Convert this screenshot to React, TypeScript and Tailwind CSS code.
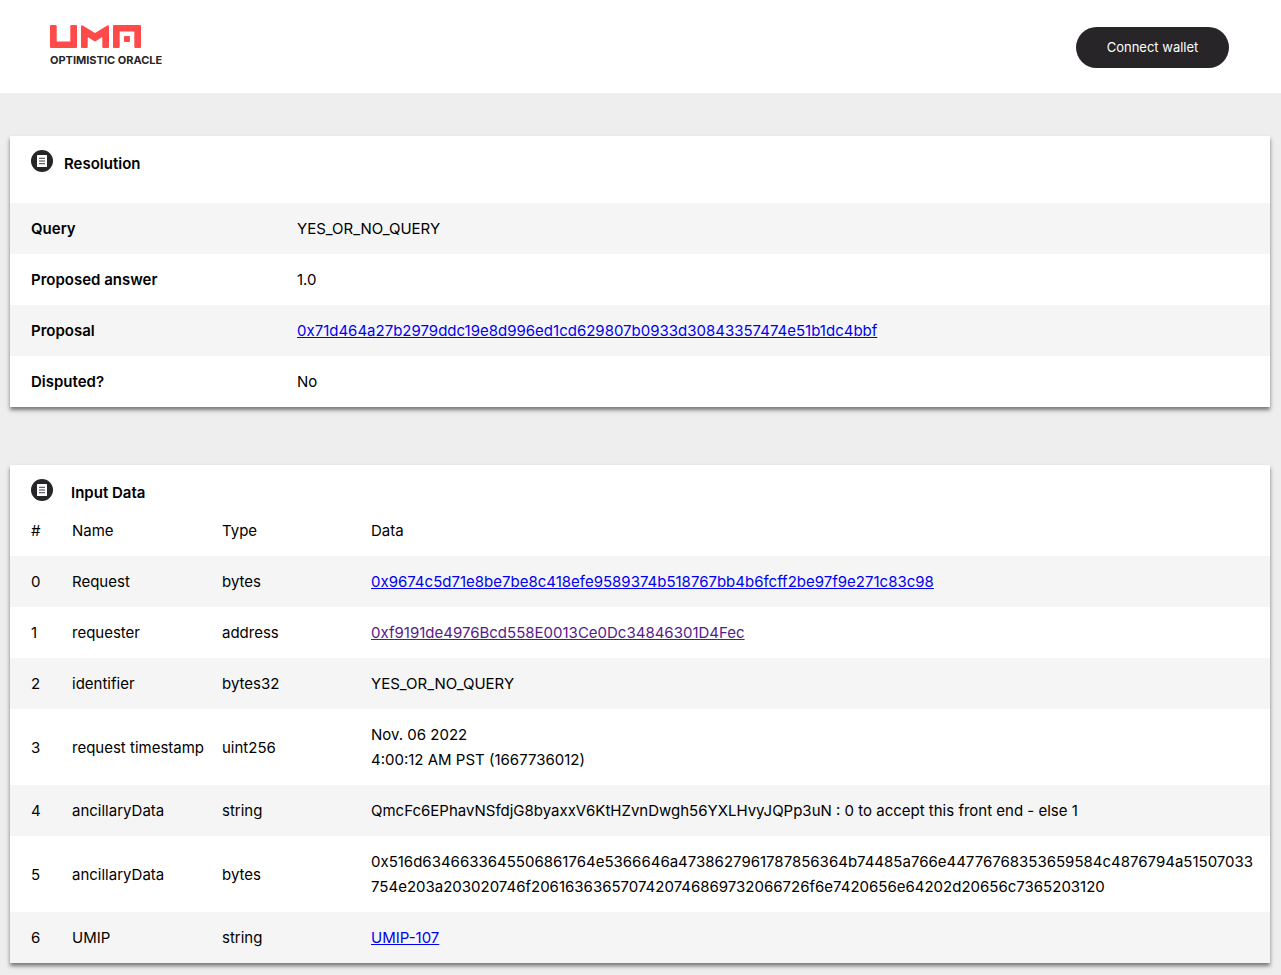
import type { ReactNode } from 'react';
import clsx from 'clsx';

interface InputRow {
  name: string;
  type: string;
  data: ReactNode;
}

const resolution: { label: string; value: ReactNode }[] = [
  { label: 'Query', value: 'YES_OR_NO_QUERY' },
  { label: 'Proposed answer', value: '1.0' },
  {
    label: 'Proposal',
    value: <DataLink>0x71d464a27b2979ddc19e8d996ed1cd629807b0933d30843357474e51b1dc4bbf</DataLink>,
  },
  { label: 'Disputed?', value: 'No' },
];

const inputData: InputRow[] = [
  {
    name: 'Request',
    type: 'bytes',
    data: <DataLink>0x9674c5d71e8be7be8c418efe9589374b518767bb4b6fcff2be97f9e271c83c98</DataLink>,
  },
  {
    name: 'requester',
    type: 'address',
    data: <DataLink seen>0xf9191de4976Bcd558E0013Ce0Dc34846301D4Fec</DataLink>,
  },
  { name: 'identifier', type: 'bytes32', data: 'YES_OR_NO_QUERY' },
  {
    name: 'request timestamp',
    type: 'uint256',
    data: (
      <>
        <div>Nov. 06 2022</div>
        <div>4:00:12 AM PST (1667736012)</div>
      </>
    ),
  },
  {
    name: 'ancillaryData',
    type: 'string',
    data: 'QmcFc6EPhavNSfdjG8byaxxV6KtHZvnDwgh56YXLHvyJQPp3uN : 0 to accept this front end - else 1',
  },
  {
    name: 'ancillaryData',
    type: 'bytes',
    data: '0x516d6346633645506861764e5366646a4738627961787856364b74485a766e44776768353659584c4876794a51507033754e203a203020746f2061636365707420746869732066726f6e7420656e64202d20656c7365203120',
  },
  { name: 'UMIP', type: 'string', data: <DataLink>UMIP-107</DataLink> },
];

function DataLink({ children, seen }: { children: ReactNode; seen?: boolean }) {
  return (
    <a href="#" className={clsx('underline', seen ? 'text-[#551a8b]' : 'text-[#0000ee]')}>
      {children}
    </a>
  );
}

function Logo() {
  return (
    <a href="#" className="flex flex-col gap-1 text-[#272528]">
      <svg width="91" height="23" viewBox="0 0 91 23" fill="#ff4a4a" aria-label="UMA">
        <path d="M1 0h4.700q1 0 1 1v15.500h13.600V1q0-1 1-1H26q1 0 1 1v21q0 1-1 1H1q-1 0-1-1V1q0-1 1-1z" />
        <path d="M31 1.500q0-2 1.700-1L45 8 57.300.5q1.700-1 1.700 1V22q0 1-1 1h-4.700q-1 0-1-1V12l-6.300 4q-1 .6-2 0l-6.300-4V22q0 1-1 1H32q-1 0-1-1z" />
        <path d="M64 0h26q1 0 1 1v21q0 1-1 1h-4.700q-1 0-1-1V6.500H69.700V22q0 1-1 1H64q-1 0-1-1V1q0-1 1-1z" />
        <rect x="74" y="11" width="6" height="6" rx="1" />
      </svg>
      <span className="text-[11px] leading-4 font-bold">OPTIMISTIC ORACLE</span>
    </a>
  );
}

function DocumentIcon() {
  return (
    <svg width="22" height="22" viewBox="0 0 22 22" fill="none" aria-hidden="true">
      <circle cx="11" cy="11" r="11" fill="#272528" />
      <rect x="6" y="5" width="10" height="12" rx="0.5" fill="#fff" />
      <path d="M8 8.300h6M8 11h6M8 13.700h6" stroke="#272528" strokeWidth="0.9" />
    </svg>
  );
}

function Card({ children }: { children: ReactNode }) {
  return <section className="bg-white shadow-[0_3px_4px_rgba(0,0,0,0.5)]">{children}</section>;
}

export default function App() {
  return (
    <div className="min-h-screen bg-[#eeeeee] font-[Inter,Arial,sans-serif] text-[15px] leading-[25px] text-black">
      <header className="flex items-start justify-between bg-white pt-[25px] pr-[52px] pb-[25px] pl-[50px]">
        <Logo />
        <button
          type="button"
          className="mt-[2px] h-[41px] w-[153px] rounded-full bg-[#272528] text-[13px] text-white"
        >
          Connect wallet
        </button>
      </header>

      <main className="flex flex-col gap-[58px] pt-[43px] pr-[11px] pb-[10px] pl-[10px]">
        <Card>
          <div className="flex h-[67px] items-start gap-[11px] px-[21px] pt-[14px]">
            <DocumentIcon />
            <h2 className="leading-7 font-semibold">Resolution</h2>
          </div>
          <table className="w-full table-fixed text-left">
            <colgroup>
              <col className="w-[277px]" />
              <col />
            </colgroup>
            <tbody>
              {resolution.map(({ label, value }) => (
                <tr key={label} className="odd:bg-[#f5f5f5]">
                  <th scope="row" className="py-[13px] pl-[21px] font-semibold">{label}</th>
                  <td className="py-[13px] pr-[14px] pl-[10px] break-words">{value}</td>
                </tr>
              ))}
            </tbody>
          </table>
        </Card>

        <Card>
          <div className="flex h-10 items-start gap-[18px] px-[21px] pt-[14px]">
            <DocumentIcon />
            <h2 className="leading-7 font-semibold">Input Data</h2>
          </div>
          <table className="w-full table-fixed text-left">
            <colgroup>
              <col className="w-[52px]" />
              <col className="w-[150px]" />
              <col className="w-[149px]" />
              <col />
            </colgroup>
            <thead>
              <tr>
                <th scope="col" className="py-[13px] pl-[21px] font-normal">#</th>
                <th scope="col" className="pl-[10px] font-normal">Name</th>
                <th scope="col" className="pl-[10px] font-normal">Type</th>
                <th scope="col" className="pl-[10px] font-normal">Data</th>
              </tr>
            </thead>
            <tbody>
              {inputData.map(({ name, type, data }, index) => (
                <tr key={index} className="odd:bg-[#f5f5f5]">
                  <td className="py-[13px] pl-[21px]">{index}</td>
                  <td className="pl-[10px]">{name}</td>
                  <td className="pl-[10px]">{type}</td>
                  <td className="py-[13px] pr-[14px] pl-[10px] break-words">{data}</td>
                </tr>
              ))}
            </tbody>
          </table>
        </Card>
      </main>
    </div>
  );
}
